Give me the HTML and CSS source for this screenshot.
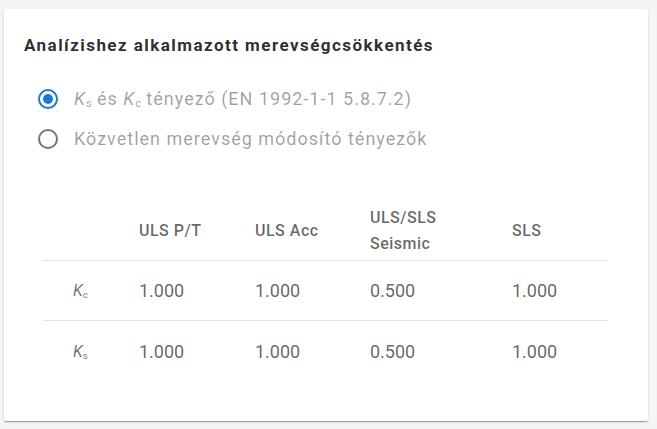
FILE: index.html
```html
<!DOCTYPE html>
<html lang="hu">
<head>
<meta charset="utf-8">
<title>Merevségcsökkentés</title>
<link rel="stylesheet" href="styles.css">
</head>
<body>
<div class="card">
  <h2 class="title">Analízishez alkalmazott merevségcsökkentés</h2>
  <div class="radios">
    <label class="radio">
      <span class="circle checked"><span class="dot"></span></span>
      <span class="label"><i>K</i><sub>s</sub> és <i>K</i><sub>c</sub> tényező (EN 1992-1-1 5.8.7.2)</span>
    </label>
    <label class="radio">
      <span class="circle"></span>
      <span class="label">Közvetlen merevség módosító tényezők</span>
    </label>
  </div>
  <div class="table">
    <div class="row head">
      <div class="cell"></div>
      <div class="cell">ULS P/T</div>
      <div class="cell">ULS Acc</div>
      <div class="cell">ULS/SLS<br>Seismic</div>
      <div class="cell">SLS</div>
    </div>
    <div class="row">
      <div class="cell key"><i>K</i><sub>c</sub></div>
      <div class="cell">1.000</div>
      <div class="cell">1.000</div>
      <div class="cell">0.500</div>
      <div class="cell">1.000</div>
    </div>
    <div class="row last">
      <div class="cell key"><i>K</i><sub>s</sub></div>
      <div class="cell">1.000</div>
      <div class="cell">1.000</div>
      <div class="cell">0.500</div>
      <div class="cell">1.000</div>
    </div>
  </div>
</div>
</body>
</html>
```
FILE: styles.css
```css
html, body {
  margin: 0;
  padding: 0;
}
body {
  background: #f5f5f5;
  font-family: Roboto, "Liberation Sans", sans-serif;
  padding: 9px 9px 8px 4px;
  height: 429px;
  box-sizing: border-box;
}
.card {
  background: #fff;
  width: 644px;
  height: 412px;
  box-sizing: border-box;
  border-radius: 2px;
  box-shadow: 0 2px 1px -1px rgba(0,0,0,0.2), 0 1px 1px 0 rgba(0,0,0,0.14), 0 1px 3px 0 rgba(0,0,0,0.12);
  padding: 24px 40px 0 20px;
}
.title {
  margin: 0;
  font-size: 17px;
  font-weight: 700;
  letter-spacing: 1.45px;
  line-height: 24px;
  color: rgba(0,0,0,0.84);
}
.radios {
  margin-top: 32px;
  display: flex;
  flex-direction: column;
  gap: 20px;
  padding-left: 14px;
}
.radio {
  display: flex;
  align-items: center;
  height: 20px;
}
.circle {
  width: 20px;
  height: 20px;
  box-sizing: border-box;
  border: 2px solid rgba(0,0,0,0.54);
  border-radius: 50%;
  display: flex;
  align-items: center;
  justify-content: center;
  flex: none;
}
.circle.checked {
  border-color: #1976d2;
}
.dot {
  width: 10px;
  height: 10px;
  border-radius: 50%;
  background: #1976d2;
}
.label {
  margin-left: 16px;
  font-size: 18px;
  letter-spacing: 1px;
  color: rgba(0,0,0,0.38);
  line-height: 20px;
}
.label sub, .key sub {
  font-size: 0.6em;
  vertical-align: -0.2em;
  line-height: 0;
  letter-spacing: 0;
}
.table {
  margin-top: 52px;
  margin-left: 20px;
  width: 563px;
}
.row {
  display: grid;
  grid-template-columns: 95px 116px 115px 142px 95px;
  height: 60px;
  box-sizing: border-box;
  border-bottom: 1px solid #e0e0e0;
  align-items: center;
}
.row.last {
  border-bottom: none;
}
.cell {
  font-size: 18px;
  color: rgba(0,0,0,0.62);
}
.head .cell {
  font-size: 16px;
  font-weight: 500;
  letter-spacing: 0.5px;
  color: rgba(0,0,0,0.6);
  line-height: 26px;
}
.cell.key {
  padding-left: 29px;
  font-size: 16px;
  color: rgba(0,0,0,0.58);
}
```
